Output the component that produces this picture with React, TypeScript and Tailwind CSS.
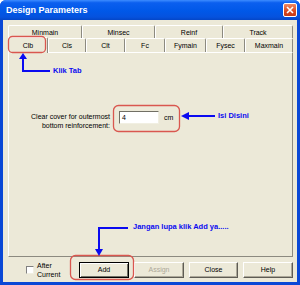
import React from 'react';

const row1 = [
  { label: 'Minmain', w: 'w-[74px]' },
  { label: 'Minsec', w: 'w-[73px]' },
  { label: 'Reinf', w: 'w-[68px]' },
  { label: 'Track', w: 'w-[70px]' },
];

const row2 = [
  { label: 'Cls', w: 'w-[38px]' },
  { label: 'Clt', w: 'w-[39px]' },
  { label: 'Fc', w: 'w-[40px]' },
  { label: 'Fymain', w: 'w-[41px]' },
  { label: 'Fysec', w: 'w-[39px]' },
  { label: 'Maxmain', w: 'w-[48px]' },
];

const btn =
  'h-[16px] text-[7px] leading-none bg-[#ece9d8] border border-t-white border-l-white border-r-[#5e5c54] border-b-[#5e5c54] shadow-[inset_-1px_-1px_0_#aca899]';

const App: React.FC = () => {
  return (
    <div className="relative w-[300px] h-[285px] bg-white font-['Liberation_Sans',Arial,sans-serif] text-black select-none">
      <div className="w-full h-full flex flex-col rounded-t-[6px] overflow-hidden bg-[#0a48d6]">
        {/* title bar */}
        <div className="h-[20px] flex items-center pl-[6px] pr-[3px] bg-[linear-gradient(to_bottom,#3d8cff_0%,#0b5fef_14%,#0058e8_55%,#0552de_85%,#0446c7_100%)]">
          <span className="text-white font-bold text-[9px] leading-none">Design Parameters</span>
          <div className="ml-auto w-[14px] h-[14px] rounded-[2px] border border-white bg-[linear-gradient(to_bottom,#f08a64,#d9481f_60%,#c43a16)] flex items-center justify-center">
            <svg width="8" height="8" viewBox="0 0 8 8">
              <path d="M1 1L7 7M7 1L1 7" stroke="white" strokeWidth="1.6" />
            </svg>
          </div>
        </div>

        {/* body */}
        <div className="flex-1 mx-[3px] mb-[3px] bg-[#ece9d8] flex flex-col pt-[5px]">
          {/* tab row 1 */}
          <div className="ml-[5px] flex h-[13px]">
            {row1.map((t) => (
              <div
                key={t.label}
                className={`${t.w} h-full flex items-center justify-center text-[7px] leading-none border-t border-l border-r border-t-white border-l-white border-r-[#8c8a80] rounded-t-[2px]`}
              >
                {t.label}
              </div>
            ))}
          </div>

          {/* tab row 2 */}
          <div className="ml-[5px] flex items-end h-[14px]">
            <div className="relative z-10 w-[40px] h-[16px] -mb-px bg-[#ece9d8] flex items-center justify-center text-[7px] leading-none border-t border-l border-r border-t-white border-l-white border-r-[#8c8a80] rounded-t-[2px]">
              Clb
            </div>
            {row2.map((t) => (
              <div
                key={t.label}
                className={`${t.w} h-full flex items-center justify-center text-[7px] leading-none border-t border-l border-r border-t-white border-l-white border-r-[#8c8a80] rounded-t-[2px]`}
              >
                {t.label}
              </div>
            ))}
          </div>

          {/* panel */}
          <div className="ml-[5px] w-[285px] h-[205px] border border-t-white border-l-white border-r-[#8c8a80] border-b-[#8c8a80]">
            <div className="mt-[58px] flex items-start">
              <div className="w-[101px] mt-[1px] text-right text-[7px] leading-[9px]">
                <div>Clear cover for outermost</div>
                <div>bottom reinforcement:</div>
              </div>
              <div className="ml-[9px] w-[40px] h-[13px] bg-white border border-t-[#716f64] border-l-[#716f64] border-r-[#f1efe2] border-b-[#f1efe2] flex items-center pl-[2px] text-[7px] leading-none">
                4
              </div>
              <div className="ml-[5px] h-[13px] flex items-center text-[7px] leading-none">cm</div>
            </div>
          </div>

          {/* bottom row */}
          <div className="flex-1 flex items-center pl-[23px]">
            <div className="w-[8px] h-[8px] bg-white border border-t-[#808080] border-l-[#808080] border-r-[#f1efe2] border-b-[#f1efe2]" />
            <div className="ml-[3px] text-[7px] leading-[9px]">
              <div>After</div>
              <div>Current</div>
            </div>
            <div className="ml-auto mr-[4px] flex gap-[5px]">
              <button className="w-[50px] h-[16px] text-[7px] leading-none bg-[#ece9d8] border border-black shadow-[inset_1px_1px_0_#fff,inset_-1px_-1px_0_#716f64]">
                Add
              </button>
              <button className={`w-[50px] text-[#aca899] ${btn}`}>Assign</button>
              <button className={`w-[49px] ${btn}`}>Close</button>
              <button className={`w-[50px] ${btn}`}>Help</button>
            </div>
          </div>
        </div>
      </div>

      {/* annotations */}
      <svg className="absolute inset-0 z-20 pointer-events-none" width="300" height="285" viewBox="0 0 300 285">
        <g fill="none" stroke="#d9574f" strokeWidth="1.3">
          <rect x="8.5" y="36.5" width="37" height="16" rx="4" />
          <rect x="113.5" y="105.5" width="66" height="26" rx="5" />
          <rect x="70.5" y="255.5" width="63" height="24" rx="5" />
        </g>
        <g stroke="#0a0af0" strokeWidth="2" fill="none">
          <path d="M23 58V71H50" />
          <path d="M188 116H215" />
          <path d="M128 228H99V250" />
        </g>
        <g fill="#0a0af0">
          <polygon points="23,53 19,59 27,59" />
          <polygon points="181,116 189,112 189,120" />
          <polygon points="99,256 95,249 103,249" />
        </g>
      </svg>
      <span className="absolute z-20 left-[53px] top-[66px] text-[7.5px] leading-[10px] font-bold text-[#0a0af0]">Klik Tab</span>
      <span className="absolute z-20 left-[218px] top-[111px] text-[7.5px] leading-[10px] font-bold text-[#0a0af0]">Isi Disini</span>
      <span className="absolute z-20 left-[133px] top-[222px] text-[7.5px] leading-[10px] font-bold text-[#0a0af0]">Jangan lupa klik Add ya.....</span>
    </div>
  );
};

export default App;
